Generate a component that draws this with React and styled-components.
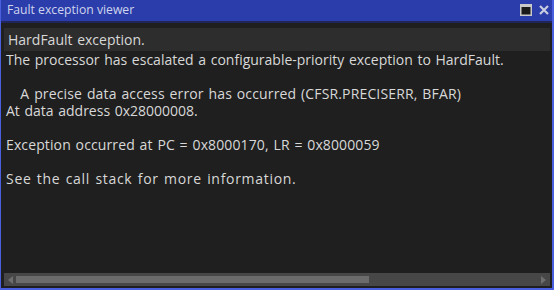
import React from "react";
import styled, { createGlobalStyle } from "styled-components";

const colors = {
	frame: "#4a5fe0",
	title: "#2b3daa",
	titleText: "#cfd5ee",
	bg: "#1f1f1f",
	header: "#2d2d2d",
	text: "#d8d8d8",
	scrollTrack: "#474747",
	scrollThumb: "#6b6b6b",
};

const GlobalStyle = createGlobalStyle`
	html, body {
		margin: 0;
		padding: 0;
		background: ${colors.bg};
	}
	* { box-sizing: border-box; }
`;

//! Layouts

const Window = styled.div`
	width: 554px;
	height: 290px;
	display: flex;
	flex-direction: column;
	background: ${colors.bg};
	border: 2px solid ${colors.frame};
	border-top: none;
	border-left-width: 1px;
	font-family: "Open Sans", "DejaVu Sans", sans-serif;
	font-size: 14px;
	word-spacing: 1px;
	color: ${colors.text};
`;

const TitleBar = styled.div`
	height: 23px;
	flex: none;
	display: flex;
	align-items: center;
	padding: 0 3px 1px 6px;
	background: ${colors.title};
	border-bottom: 2px solid #20265a;
	color: ${colors.titleText};
	font-size: 12.2px;
	word-spacing: 0;
`;

const TitleText = styled.span`
	flex: 1;
	margin-top: -1px;
`;

const TitleButtons = styled.div`
	display: flex;
	align-items: center;
	gap: 7px;
`;

const Content = styled.div`
	flex: 1;
	display: flex;
	flex-direction: column;
	padding: 5px 2px 0 3px;
	min-height: 0;
`;

const Header = styled.div`
	height: 23px;
	display: flex;
	align-items: center;
	padding-left: 4px;
	background: ${colors.header};
`;

const Body = styled.div`
	flex: 1;
	padding: 0 0 0 2px;
	line-height: 17px;
	white-space: pre;
`;

const Line = styled.div`
	height: 17px;
	letter-spacing: ${(props) => props.$track || 0}px;
`;

const ScrollBar = styled.div`
	height: 13px;
	margin-bottom: 2px;
	display: flex;
	align-items: center;
	background: ${colors.scrollTrack};
	padding: 0 4px;
	gap: 3px;
`;

const Thumb = styled.div`
	height: 7px;
	width: 353px;
	background: ${colors.scrollThumb};
`;

const Spacer = styled.div`
	flex: 1;
`;

const Arrow = ({ dir }) => (
	<svg width="5" height="8" viewBox="0 0 5 8">
		<path
			d={dir === "left" ? "M5 0 L0 4 L5 8 Z" : "M0 0 L5 4 L0 8 Z"}
			fill="#6e6e6e"
		/>
	</svg>
);

const MaxIcon = () => (
	<svg width="12" height="12" viewBox="0 0 12 12">
		<rect x="0" y="0" width="12" height="12" fill="#c9c9c9" />
		<rect x="1.5" y="3" width="9" height="7.5" fill="#1a1a1a" />
	</svg>
);

const CloseIcon = () => (
	<svg width="10" height="10" viewBox="0 0 10 10">
		<path d="M1 1 L9 9 M9 1 L1 9" stroke="#c9cde0" strokeWidth="2.2" />
	</svg>
);

const lines = [
	{ text: "The processor has escalated a configurable-priority exception to HardFault." },
	{ text: "" },
	{ text: "   A precise data access error has occurred (CFSR.PRECISERR, BFAR)", track: 0.15 },
	{ text: "At data address 0x28000008." },
	{ text: "" },
	{ text: "Exception occurred at PC = 0x8000170, LR = 0x8000059", track: 0.12 },
	{ text: "" },
	{ text: "See the call stack for more information.", track: 0.7 },
];

export default function App() {
	return (
		<>
			<GlobalStyle />
			<Window>
				<TitleBar>
					<TitleText>Fault exception viewer</TitleText>
					<TitleButtons>
						<MaxIcon />
						<CloseIcon />
					</TitleButtons>
				</TitleBar>
				<Content>
					<Header>HardFault exception.</Header>
					<Body>
						{lines.map((l, i) => (
							<Line key={i} $track={l.track}>
								{l.text}
							</Line>
						))}
					</Body>
					<ScrollBar>
						<Arrow dir="left" />
						<Thumb />
						<Spacer />
						<Arrow dir="right" />
					</ScrollBar>
				</Content>
			</Window>
		</>
	);
}
